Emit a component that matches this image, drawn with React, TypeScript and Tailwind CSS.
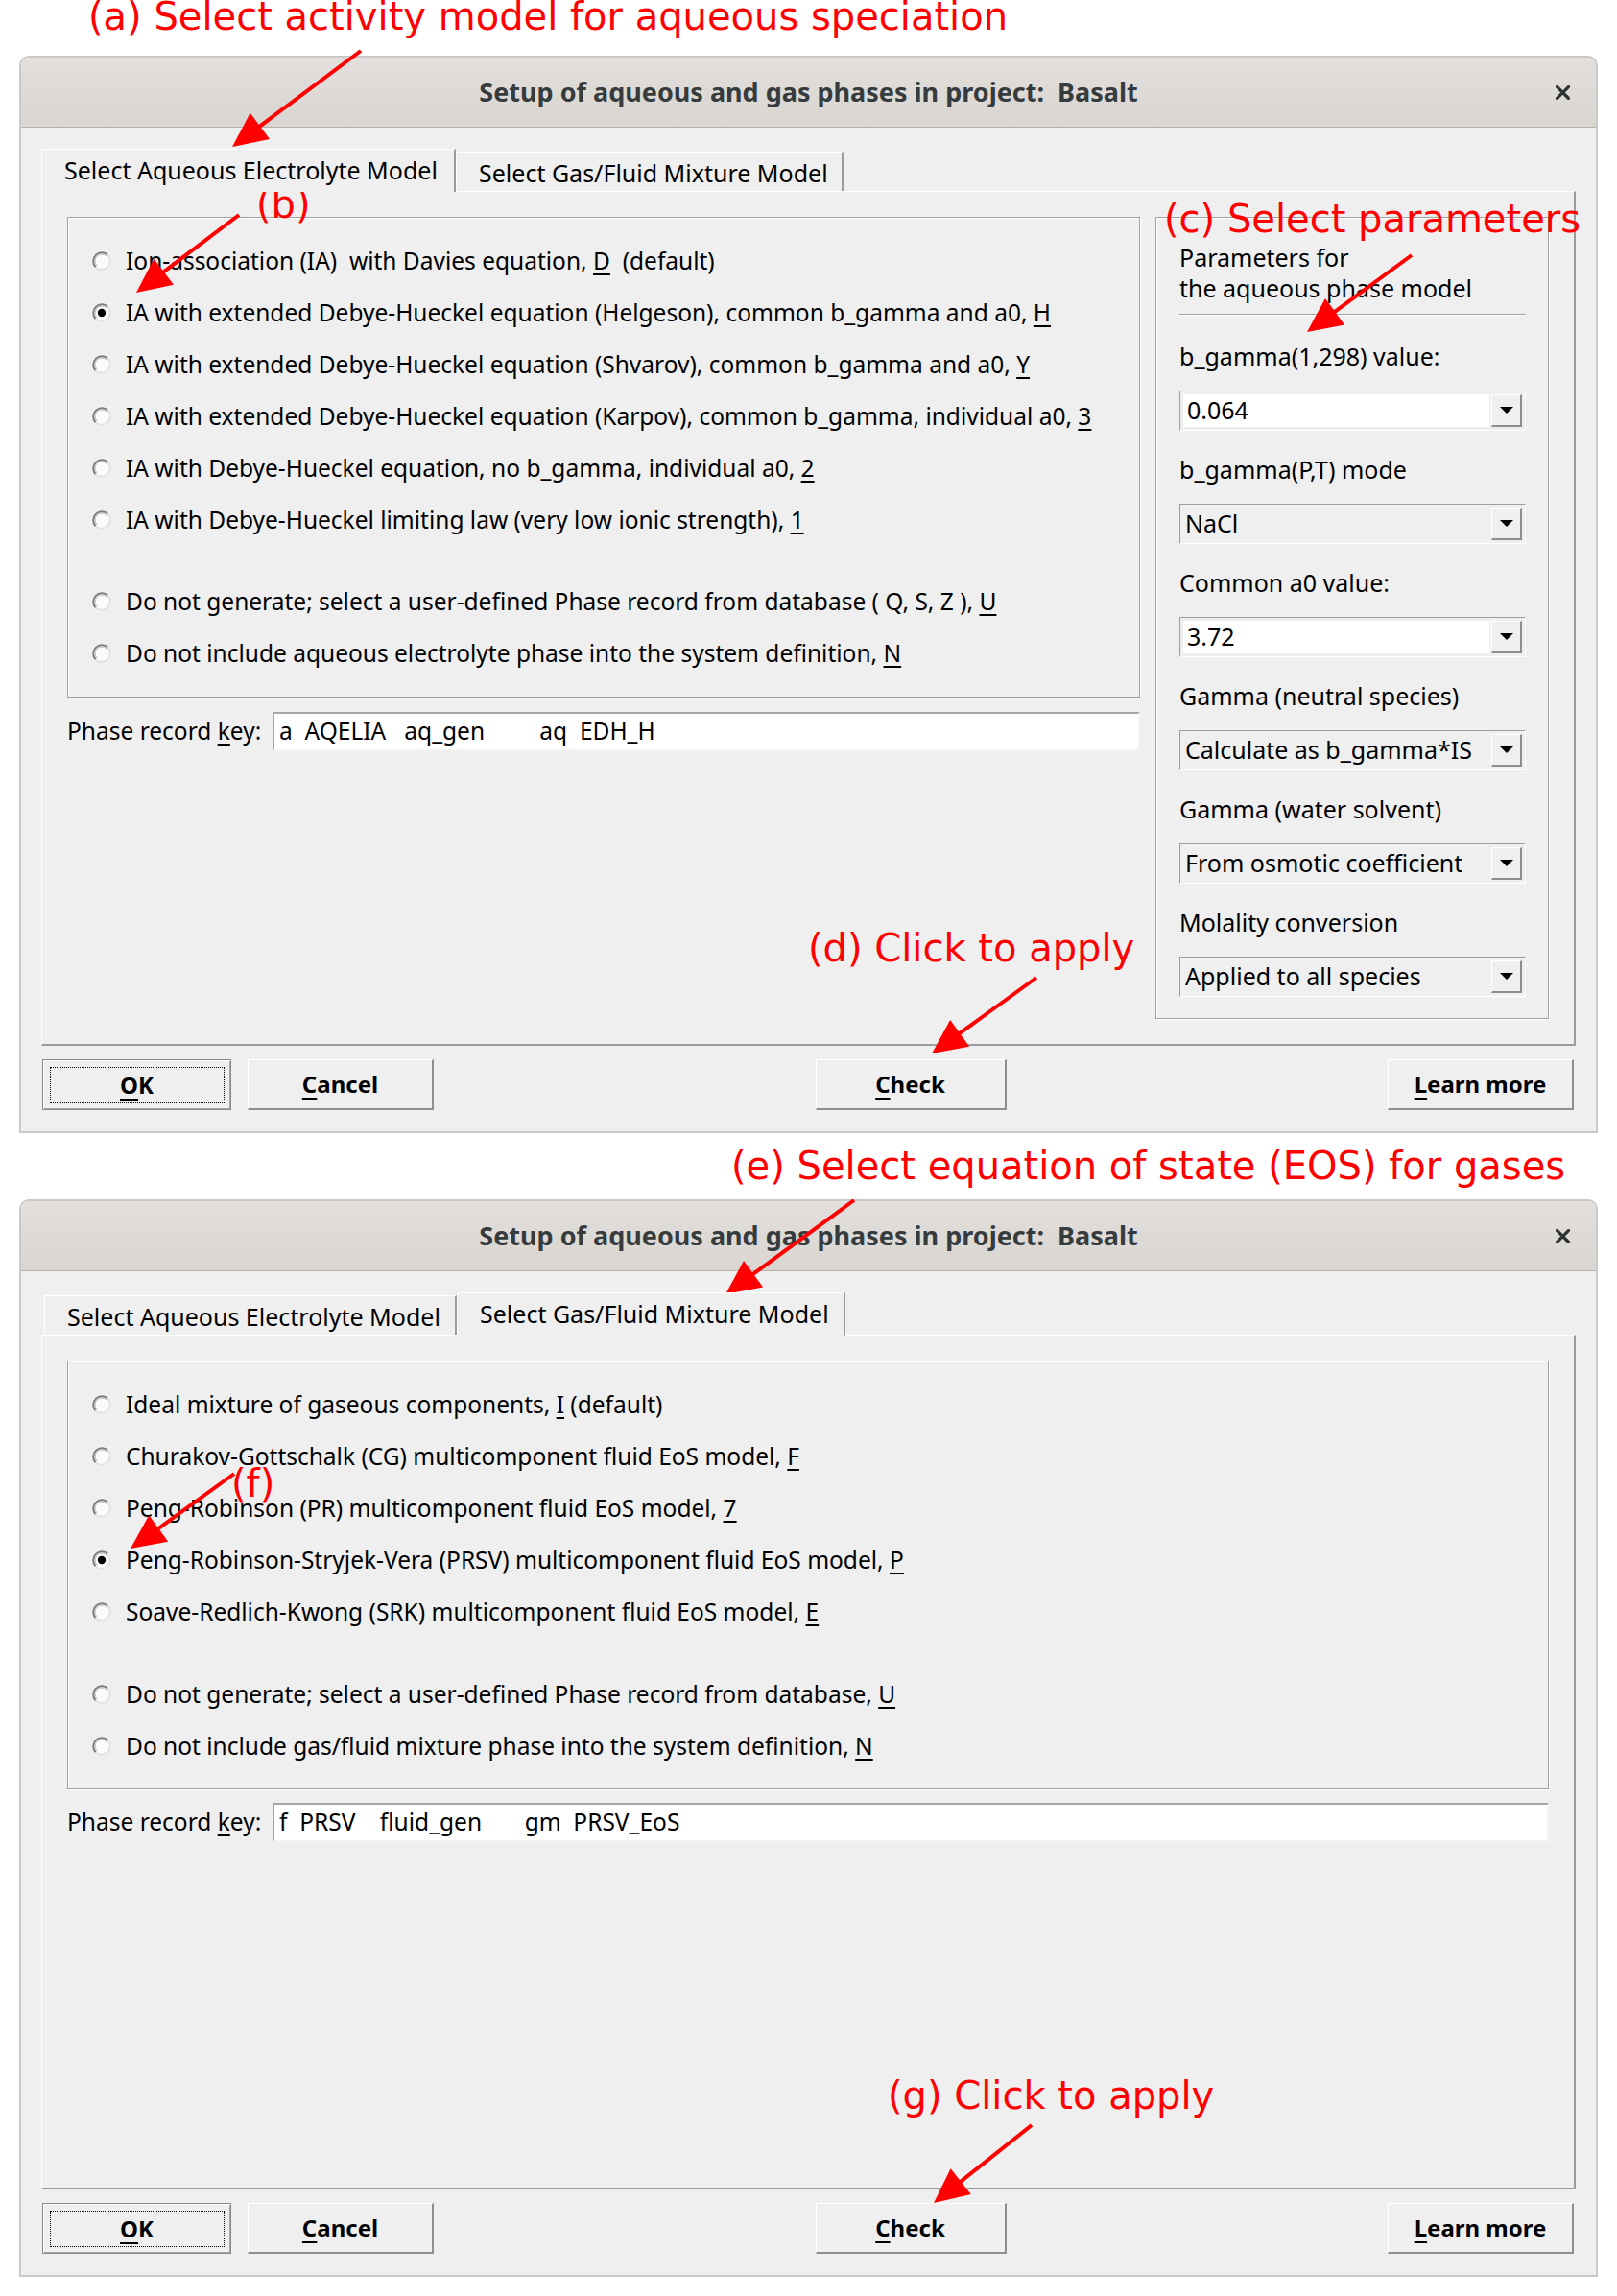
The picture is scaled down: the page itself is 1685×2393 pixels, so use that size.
import React from "react";

type Lbl = { pre: string; u: string; post?: string };

const aqRadios: Lbl[] = [
  { pre: "Ion-association (IA)  with Davies equation, ", u: "D", post: "  (default)" },
  { pre: "IA with extended Debye-Hueckel equation (Helgeson), common b_gamma and a0, ", u: "H" },
  { pre: "IA with extended Debye-Hueckel equation (Shvarov), common b_gamma and a0, ", u: "Y" },
  { pre: "IA with extended Debye-Hueckel equation (Karpov), common b_gamma, individual a0, ", u: "3" },
  { pre: "IA with Debye-Hueckel equation, no b_gamma, individual a0, ", u: "2" },
  { pre: "IA with Debye-Hueckel limiting law (very low ionic strength), ", u: "1" },
];
const aqRadios2: Lbl[] = [
  { pre: "Do not generate; select a user-defined Phase record from database ( Q, S, Z ), ", u: "U" },
  { pre: "Do not include aqueous electrolyte phase into the system definition, ", u: "N" },
];
const gasRadios: Lbl[] = [
  { pre: "Ideal mixture of gaseous components, ", u: "I", post: " (default)" },
  { pre: "Churakov-Gottschalk (CG) multicomponent fluid EoS model, ", u: "F" },
  { pre: "Peng-Robinson (PR) multicomponent fluid EoS model, ", u: "7" },
  { pre: "Peng-Robinson-Stryjek-Vera (PRSV) multicomponent fluid EoS model, ", u: "P" },
  { pre: "Soave-Redlich-Kwong (SRK) multicomponent fluid EoS model, ", u: "E" },
];
const gasRadios2: Lbl[] = [
  { pre: "Do not generate; select a user-defined Phase record from database, ", u: "U" },
  { pre: "Do not include gas/fluid mixture phase into the system definition, ", u: "N" },
];

function RadioIcon({ checked }: { checked: boolean }) {
  return (
    <svg width="22" height="22" viewBox="0 0 22 22" className="shrink-0">
      <circle cx="11" cy="11" r="9" fill="#fbfbfb" />
      <path d="M 4.64 17.36 A 9 9 0 0 1 17.36 4.64" fill="none" stroke="#7c7c7c" strokeWidth="2" />
      <path d="M 17.36 4.64 A 9 9 0 0 1 4.64 17.36" fill="none" stroke="#e2e2e2" strokeWidth="2" />
      <path d="M 6.05 15.95 A 7 7 0 0 1 15.95 6.05" fill="none" stroke="#b8b8b8" strokeWidth="1" />
      {checked && <circle cx="11" cy="11" r="4.2" fill="#000000" />}
    </svg>
  );
}

function Radio({ l, checked }: { l: Lbl; checked?: boolean }) {
  return (
    <div className="h-[54px] flex items-center pl-[24px] gap-[14px]">
      <RadioIcon checked={!!checked} />
      <span className="whitespace-pre text-[24.5px] text-black">
        {l.pre}
        <span className="underline decoration-[1.5px] underline-offset-[4px]">{l.u}</span>
        {l.post}
      </span>
    </div>
  );
}

const etched =
  "border border-[#a0a0a0] shadow-[inset_1px_1px_0_#ffffff,1px_1px_0_#ffffff]";

function KeyRow({ value }: { value: string }) {
  return (
    <div className="flex items-center h-[41px]">
      <div className="w-[214px] shrink-0 text-[24.5px] whitespace-pre">
        Phase record <span className="underline decoration-[1.5px] underline-offset-[4px]">k</span>ey:
      </div>
      <div className="flex-1 h-[41px] bg-white border-t-2 border-l-2 border-[#a6a6a6] border-b-2 border-r-2 border-b-[#f4f4f4] border-r-[#f4f4f4] flex items-center pl-[5px] text-[24.5px] whitespace-pre">
        {value}
      </div>
    </div>
  );
}

function Combo({ value, editable }: { value: string; editable?: boolean }) {
  return (
    <div className="h-[42px] flex border-t border-l border-[#9e9e9e] border-b border-r border-b-white border-r-white p-[3px]">
      <div
        className={
          editable
            ? "flex-1 bg-white flex items-center pl-[4px] text-[25px] mr-[2px]"
            : "flex-1 flex items-center pl-[2px] text-[25px] mr-[2px]"
        }
      >
        {value}
      </div>
      <div className="w-[32px] shrink-0 flex items-center justify-center bg-[#efefef] border-t border-l border-white border-b-2 border-r-2 border-b-[#8e8e8e] border-r-[#8e8e8e]">
        <svg width="14" height="7" viewBox="0 0 14 7">
          <path d="M0 0 H14 L7 7 Z" fill="#000" />
        </svg>
      </div>
    </div>
  );
}

function ParamBlock({ label, value, editable }: { label: string; value: string; editable?: boolean }) {
  return (
    <div className="flex flex-col">
      <div className="h-[36px] flex items-center text-[25px] whitespace-pre">{label}</div>
      <div className="mt-[17px]">
        <Combo value={value} editable={editable} />
      </div>
    </div>
  );
}

function ParamGroup() {
  return (
    <div className={`w-[410px] h-[836px] shrink-0 ${etched} pl-[24px] pr-[23px] pt-[25px]`}>
      <div className="text-[25px] leading-[32px]">
        <div>Parameters for</div>
        <div>the aqueous phase model</div>
      </div>
      <div className="mt-[11px] h-[2px] border-t border-[#a0a0a0] border-b border-b-white" />
      <div className="mt-[25px] flex flex-col gap-[23px]">
        <ParamBlock label="b_gamma(1,298) value:" value="0.064" editable />
        <ParamBlock label="b_gamma(P,T) mode" value="NaCl" />
        <ParamBlock label="Common a0 value:" value="3.72" editable />
        <ParamBlock label="Gamma (neutral species)" value="Calculate as b_gamma*IS" />
        <ParamBlock label="Gamma (water solvent)" value="From osmotic coefficient" />
        <ParamBlock label="Molality conversion" value="Applied to all species" />
      </div>
    </div>
  );
}

function Btn({ pre, u, post, def, w }: { pre?: string; u: string; post: string; def?: boolean; w: string }) {
  return (
    <div
      className={
        def
          ? `relative ${w} h-[53px] flex items-center justify-center border border-[#8a8a8a] shadow-[inset_1px_1px_0_#ffffff,inset_-1px_-1px_0_#a8a8a8] text-[24px] font-bold`
          : `relative ${w} h-[53px] flex items-center justify-center border-t border-l border-white border-b-2 border-r-2 border-b-[#8e8e8e] border-r-[#8e8e8e] text-[24px] font-bold`
      }
    >
      {def && <div className="absolute left-[7px] right-[6px] top-[7px] bottom-[6px] border border-dotted border-black" />}
      <span className="whitespace-pre">
        {pre}
        <span className="underline decoration-2 underline-offset-[5px]">{u}</span>
        {post}
      </span>
    </div>
  );
}

function CloseIcon() {
  return (
    <svg width="15" height="15" viewBox="0 0 15 15">
      <path d="M1.5 1.5 L13.5 13.5 M13.5 1.5 L1.5 13.5" stroke="#2e3436" strokeWidth="3.2" strokeLinecap="square" />
    </svg>
  );
}

function Tab({ label, active, w, ml }: { label: string; active?: boolean; w: string; ml?: string }) {
  return (
    <div
      className={
        active
          ? `${w} ${ml ?? ""} h-[45px] -mb-px relative z-10 bg-[#efefef] border-t border-l border-white border-r-2 border-r-[#9b9b9b] flex items-center pl-[23px] text-[25px] whitespace-pre`
          : `${w} ${ml ?? ""} h-[41px] bg-[#efefef] border-t border-l border-white border-r-2 border-r-[#9b9b9b] flex items-center pl-[23px] pt-[4px] text-[25px] whitespace-pre`
      }
    >
      {label}
    </div>
  );
}

function Dialog({ active, children, className }: { active: 0 | 1; children: React.ReactNode; className?: string }) {
  return (
    <div
      className={`ml-[20px] w-[1645px] h-[1123px] flex flex-col border-2 border-[#c9c9c9] rounded-t-[10px] bg-[#efefef] overflow-hidden ${className ?? ""}`}
    >
      <div className="h-[73px] shrink-0 flex items-center bg-gradient-to-b from-[#e2dfdc] to-[#d9d5d1] border-b border-[#b7b1ab]">
        <div className="w-[80px]" />
        <div className="flex-1 text-center text-[27px] font-bold text-[#363b3d] whitespace-pre">
          Setup of aqueous and gas phases in project:  Basalt
        </div>
        <div className="w-[80px] flex justify-end pr-[27px]">
          <CloseIcon />
        </div>
      </div>
      <div className="flex-1 flex flex-col px-[21px] pt-[22px]">
        <div className="h-[44px] flex items-end">
          {active === 0 ? (
            <>
              <Tab label="Select Aqueous Electrolyte Model" active w="w-[432px]" />
              <Tab label="Select Gas/Fluid Mixture Model" w="w-[404px]" />
            </>
          ) : (
            <>
              <Tab label="Select Aqueous Electrolyte Model" w="w-[430px]" ml="ml-[3px]" />
              <Tab label="Select Gas/Fluid Mixture Model" active w="w-[405px]" />
            </>
          )}
        </div>
        <div className="h-[891px] border-t border-l border-white border-r-2 border-b-2 border-r-[#9b9b9b] border-b-[#9b9b9b] p-[26px]">
          {children}
        </div>
        <div className="mt-[14px] flex pl-[1px] pr-[2px]">
          <Btn u="O" post="K" def w="w-[197px]" />
          <div className="w-[17px]" />
          <Btn u="C" post="ancel" w="w-[194px]" />
          <div className="flex-1" />
          <Btn u="C" post="heck" w="w-[199px]" />
          <div className="flex-1" />
          <Btn u="L" post="earn more" w="w-[194px]" />
        </div>
      </div>
    </div>
  );
}

type Arrow = { x1: number; y1: number; x2: number; y2: number };
const arrows: Arrow[] = [
  { x1: 376, y1: 53, x2: 242, y2: 153 },
  { x1: 249, y1: 224, x2: 142, y2: 305 },
  { x1: 1471, y1: 266, x2: 1362, y2: 346 },
  { x1: 1080, y1: 1019, x2: 971, y2: 1098 },
  { x1: 890, y1: 1251, x2: 756, y2: 1349 },
  { x1: 244, y1: 1536, x2: 136, y2: 1614 },
  { x1: 1075, y1: 2215, x2: 973, y2: 2296 },
];

function ArrowShape({ a }: { a: Arrow }) {
  const dx = a.x2 - a.x1;
  const dy = a.y2 - a.y1;
  const len = Math.sqrt(dx * dx + dy * dy);
  const ux = dx / len;
  const uy = dy / len;
  const L = 36;
  const hw = 17;
  const bx = a.x2 - ux * L;
  const by = a.y2 - uy * L;
  const p1 = `${bx - uy * hw},${by + ux * hw}`;
  const p2 = `${bx + uy * hw},${by - ux * hw}`;
  return (
    <g>
      <line x1={a.x1} y1={a.y1} x2={bx + ux * 4} y2={by + uy * 4} stroke="#ff0000" strokeWidth="4" />
      <polygon points={`${a.x2},${a.y2} ${p1} ${p2}`} fill="#ff0000" />
    </g>
  );
}

function Note({ text, cls }: { text: string; cls: string }) {
  return (
    <div
      className={`absolute ${cls} font-['DejaVu_Sans',sans-serif] text-[40px] leading-[40px] text-[#ff0000] whitespace-pre`}
    >
      {text}
    </div>
  );
}

export default function App() {
  return (
    <div className="relative w-[1685px] h-[2393px] bg-white overflow-hidden font-['Noto_Sans','Open_Sans',sans-serif] text-black pt-[58px]">
      <Dialog active={0}>
        <div className="flex gap-[16px] items-start">
          <div className="flex-1 flex flex-col">
            <div className={`h-[501px] ${etched} pt-[18px]`}>
              {aqRadios.map((l, i) => (
                <Radio key={i} l={l} checked={i === 1} />
              ))}
              <div className="h-[31px]" />
              {aqRadios2.map((l, i) => (
                <Radio key={i} l={l} />
              ))}
            </div>
            <div className="mt-[15px]">
              <KeyRow value="a  AQELIA   aq_gen         aq  EDH_H" />
            </div>
          </div>
          <ParamGroup />
        </div>
      </Dialog>

      <Dialog active={1} className="mt-[69px]">
        <div className="flex flex-col">
          <div className={`h-[447px] ${etched} pt-[18px]`}>
            {gasRadios.map((l, i) => (
              <Radio key={i} l={l} checked={i === 3} />
            ))}
            <div className="h-[32px]" />
            {gasRadios2.map((l, i) => (
              <Radio key={i} l={l} />
            ))}
          </div>
          <div className="mt-[14px]">
            <KeyRow value="f  PRSV    fluid_gen       gm  PRSV_EoS" />
          </div>
        </div>
      </Dialog>

      <Note text="(a) Select activity model for aqueous speciation" cls="left-[92px] top-[-3px]" />
      <Note text="(b)" cls="left-[267px] top-[193px]" />
      <Note text="(c) Select parameters" cls="left-[1213px] top-[208px]" />
      <Note text="(d) Click to apply" cls="left-[842px] top-[968px]" />
      <Note text="(e) Select equation of state (EOS) for gases" cls="left-[762px] top-[1195px]" />
      <Note text="(f)" cls="left-[241px] top-[1526px]" />
      <Note text="(g) Click to apply" cls="left-[925px] top-[2164px]" />

      <svg className="absolute left-0 top-0 pointer-events-none" width="1685" height="2393" viewBox="0 0 1685 2393">
        {arrows.map((a, i) => (
          <ArrowShape key={i} a={a} />
        ))}
      </svg>
    </div>
  );
}
